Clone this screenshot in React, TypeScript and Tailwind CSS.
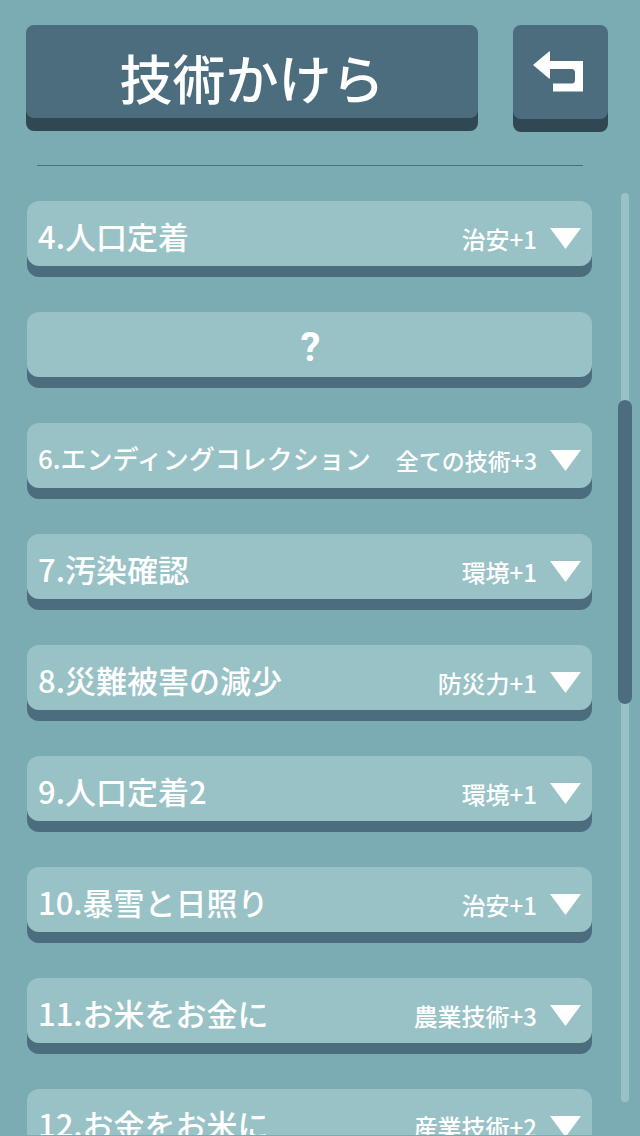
import { useState } from 'react'

type Fragment = {
  no: number
  title?: string
  reward?: string
  compact?: boolean
}

const fragments: Fragment[] = [
  { no: 4, title: '人口定着', reward: '治安+1' },
  { no: 5 },
  { no: 6, title: 'エンディングコレクション', reward: '全ての技術+3', compact: true },
  { no: 7, title: '汚染確認', reward: '環境+1' },
  { no: 8, title: '災難被害の減少', reward: '防災力+1' },
  { no: 9, title: '人口定着2', reward: '環境+1' },
  { no: 10, title: '暴雪と日照り', reward: '治安+1' },
  { no: 11, title: 'お米をお金に', reward: '農業技術+3' },
  { no: 12, title: 'お金をお米に', reward: '産業技術+2' },
]

// thumb position and size, as a share of the track
const scroll = { start: 207 / 909, size: 304 / 909 }

function Header() {
  return (
    <header className="flex items-start gap-[35px] pt-[25px] pr-8 pl-[26px]">
      <h1 className="flex h-[93px] flex-1 items-center justify-center rounded-lg bg-[#4b6d7d] pt-3 text-[53px] leading-none font-medium shadow-[0_13px_0_#304854]">
        技術かけら
      </h1>
      <button
        type="button"
        aria-label="戻る"
        className="flex h-[94px] w-[95px] justify-center rounded-lg bg-[#4b6d7d] pt-[26px] pr-1.5 shadow-[0_13px_0_#304854]"
      >
        <svg width="50" height="41" viewBox="0 0 50 41" fill="currentColor" aria-hidden="true">
          <path d="M0 14 16 .5h1V10h33v30.500H20V32.500h18.500q3.500 0 3.500-3.500V21.500q0-3.500-3.500-3.500H17v9.500h-1z" />
        </svg>
      </button>
    </header>
  )
}

function FragmentRow({ item }: { item: Fragment }) {
  const [open, setOpen] = useState(false)

  if (!item.title) {
    return (
      <li className="flex h-[65px] shrink-0 items-center justify-center rounded-xl bg-[#99c2c6] pt-1.5 pl-0.5 font-['Roboto',sans-serif] text-[40px] leading-none font-bold shadow-[0_11px_0_#4b6d7d]">
        ?
      </li>
    )
  }

  return (
    <li className="shrink-0">
      <button
        type="button"
        aria-expanded={open}
        onClick={() => setOpen((p) => !p)}
        className="flex h-[65px] w-full items-center rounded-xl bg-[#99c2c6] px-[11px] font-medium whitespace-nowrap shadow-[0_11px_0_#4b6d7d]"
      >
        <span className={`mt-1 leading-none ${item.compact ? 'text-[26px]' : 'text-[31px]'}`}>
          {item.no}.{item.title}
        </span>
        <span className={`mt-2.5 ml-auto leading-none ${item.compact ? 'text-[23px]' : 'text-2xl'}`}>
          {item.reward}
        </span>
        <svg
          width="31"
          height="21"
          viewBox="0 0 31 21"
          fill="currentColor"
          aria-hidden="true"
          className="mt-2.5 ml-[13px]"
        >
          <path d="M0 0h31L15.500 21z" />
        </svg>
      </button>
    </li>
  )
}

function ScrollBar() {
  return (
    <div className="flex w-[14px] justify-center pt-[27px] pb-[33px]" aria-hidden="true">
      <div className="relative w-2 rounded-full bg-[#99c2c6]">
        <div
          className="absolute -inset-x-[3px] rounded-full bg-[#4b6d7d]"
          style={{ top: `${scroll.start * 100}%`, height: `${scroll.size * 100}%` }}
        />
      </div>
    </div>
  )
}

export default function App() {
  return (
    <div
      lang="ja"
      className="flex h-screen flex-col bg-[#7bacb3] pb-px font-['Noto_Sans_CJK_JP',sans-serif] text-white"
    >
      <Header />
      <hr className="mt-[46px] mr-[57px] ml-[37px] border-t border-[#4b6d7d]" />
      <main className="flex min-h-0 flex-1 pr-2 pl-[27px]">
        <ul className="flex flex-1 flex-col gap-[46px] overflow-y-auto pt-[35px] pb-[46px] [scrollbar-width:none]">
          {fragments.map((item) => (
            <FragmentRow key={item.no} item={item} />
          ))}
        </ul>
        <div className="ml-[26px] flex">
          <ScrollBar />
        </div>
      </main>
    </div>
  )
}
